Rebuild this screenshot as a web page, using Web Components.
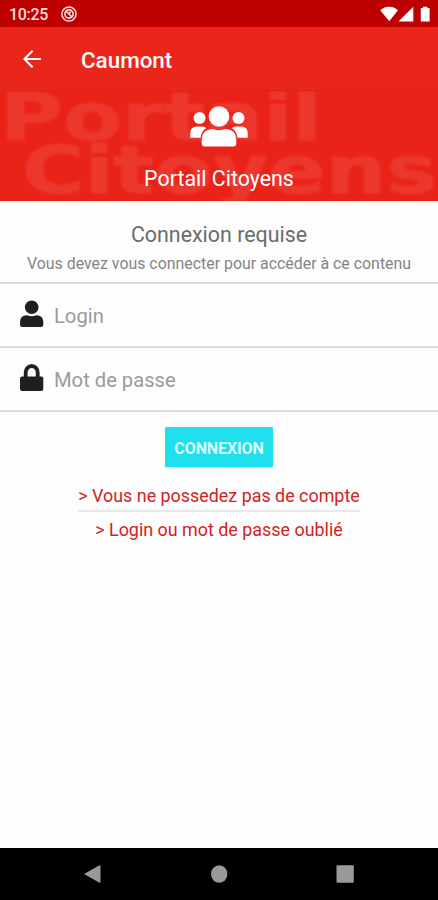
<!DOCTYPE html>
<html lang="fr">
<head>
<meta charset="UTF-8">
<meta name="viewport" content="width=device-width, initial-scale=1.0">
<title>Portail Citoyens</title>
<style>
  html, body {
    margin: 0;
    height: 100%;
    background-color: #fdfdfd;
    font-family: Roboto, "Liberation Sans", sans-serif;
  }
</style>
</head>
<body>
<login-page></login-page>

<script>
// Attach an open shadow root filled from a template
function render(host, html) {
  const template = document.createElement('template');
  template.innerHTML = html;
  host.attachShadow({ mode: 'open' }).appendChild(template.content.cloneNode(true));
}

// Android status bar
class StatusBar extends HTMLElement {
  constructor() {
    super();
    render(this, `
      <style>
      :host {
        display: flex;
        align-items: center;
        height: 27px;
        padding: 0 8px 0 9px;
        box-sizing: border-box;
        background-color: #be0000;
        color: #fbdcdc;
      }
      .time {
        font-size: 16px;
        font-weight: 500;
        letter-spacing: -0.3px;
        line-height: 20px;
        margin-top: 2px;
      }
      .app { width: 16px; height: 16px; margin-left: 13px; }
      .right { display: block; width: 50px; height: 16px; margin-left: auto; }
      </style>
      <span class="time">10:25</span>
      <svg class="app" viewBox="0 0 16 16" fill="none" stroke="#fbdcdc">
        <circle cx="8" cy="8" r="7.1" stroke-width="1.5"/>
        <circle cx="8" cy="8" r="4.1" stroke-width="1.6"/>
        <path d="M4.5 4.5L11.5 11.5M7 7.5L10 6" stroke-width="1.6"/>
      </svg>
      <svg class="right" viewBox="0 0 50 16" fill="#fff">
        <path d="M.3 4.2C5.5-.3 12.8-.3 18 4.2L9.2 15.3Z"/>
        <path d="M33.3.8V15.5H18.5Z"/>
        <path d="M43 .7h4.400v1.300h2.200v13.500h-8.800V2h2.200z"/>
      </svg>
    `);
  }
}

// Top bar: back arrow + page title
class AppBar extends HTMLElement {
  constructor() {
    super();
    render(this, `
      <style>
      :host {
        display: flex;
        align-items: center;
        height: 64px;
        padding-left: 22px;
        box-sizing: border-box;
        background-color: #ea261b;
        border-bottom: 1px solid #e12218;
        color: #fff;
      }
      svg { width: 20px; height: 20px; }
      h1 {
        margin: 2px 0 0 39px;
        font-size: 22.4px;
        font-weight: 500;
        line-height: 28px;
      }
      </style>
      <svg viewBox="0 0 20 20" fill="none" stroke="#fff" stroke-width="2">
        <path d="M18.8 10H3M10.6 1.8L2.4 10L10.6 18.2"/>
      </svg>
      <h1><slot></slot></h1>
    `);
  }
}

// Banner with the large faded lettering behind the icon
class PortalBanner extends HTMLElement {
  constructor() {
    super();
    render(this, `
      <style>
      :host {
        display: grid;
        height: 110px;
        overflow: hidden;
        background-color: #ea2319;
        color: #fff;
      }
      .back, .front { grid-area: 1 / 1; }
      .back {
        width: 438px;
        height: 110px;
        font-family: "DejaVu Sans", sans-serif;
        font-weight: bold;
        filter: blur(1.3px);
      }
      .front {
        z-index: 1;
        display: flex;
        flex-direction: column;
        align-items: center;
        padding-top: 15px;
      }
      .front svg { width: 58px; height: 41px; }
      .name {
        margin-top: 19px;
        font-size: 21.4px;
        line-height: 26px;
      }
      </style>
      <svg class="back" viewBox="0 0 438 110" fill="#ec372d" stroke="#ec372d" stroke-width="1" aria-hidden="true">
        <text x="0" y="49" font-size="65" textLength="322" lengthAdjust="spacingAndGlyphs">Portail</text>
        <text x="22" y="102" font-size="65" textLength="415" lengthAdjust="spacingAndGlyphs">Citoyens</text>
      </svg>
      <div class="front">
        <svg viewBox="0 0 58 41" fill="#fff">
          <circle cx="29" cy="10.5" r="10.3"/>
          <circle cx="9.5" cy="12" r="6"/>
          <circle cx="48.5" cy="12" r="6"/>
          <path d="M.3 31.7V27Q.3 20.5 7 20.5H12Q14.5 20.5 16.5 22Q11 25.3 10.6 31.7Z"/>
          <path d="M57.7 31.7V27Q57.7 20.5 51 20.5H46Q43.5 20.5 41.5 22Q47 25.3 47.4 31.7Z"/>
          <path d="M22 23H23Q29 25.5 35 23H36Q46.3 23.5 46.3 34V37.5Q46.3 40.5 43.3 40.5H14.7Q11.7 40.5 11.7 37.5V34Q11.7 23.5 22 23Z"/>
        </svg>
        <div class="name"><slot></slot></div>
      </div>
    `);
  }
}

// Input row, the icon goes in the "icon" slot
class FormField extends HTMLElement {
  constructor() {
    super();
    render(this, `
      <style>
      :host {
        display: flex;
        align-items: center;
        height: 64px;
        padding-left: 19px;
        box-sizing: border-box;
        border-bottom: 2px solid #dedede;
        color: #9b9b9b;
      }
      ::slotted(svg) { width: 25px; height: 28px; margin-bottom: 2px; }
      .label {
        margin: 1px 0 0 10px;
        font-size: 20.2px;
        line-height: 26px;
      }
      </style>
      <slot name="icon"></slot>
      <span class="label"><slot></slot></span>
    `);
  }
}

// Android navigation bar
class NavBar extends HTMLElement {
  constructor() {
    super();
    render(this, `
      <style>
      :host {
        display: flex;
        justify-content: space-between;
        align-items: center;
        height: 52px;
        padding: 0 84px;
        box-sizing: border-box;
        background-color: #000;
      }
      svg { width: 18px; height: 18px; fill: #999; }
      </style>
      <svg viewBox="0 0 18 18"><path d="M0 9L15.5.2Q16.5 0 16.5 1V17Q16.5 18 15.5 17.8Z"/></svg>
      <svg viewBox="0 0 18 18"><ellipse cx="9.2" cy="9" rx="8.2" ry="8.8"/></svg>
      <svg viewBox="0 0 18 18"><rect x=".5" y=".3" width="17.3" height="17.5" rx="1"/></svg>
    `);
  }
}

class LoginPage extends HTMLElement {
  constructor() {
    super();
    render(this, `
      <style>
      :host {
        display: flex;
        flex-direction: column;
        height: 900px;
        overflow: hidden;
      }
      main {
        flex: 1;
        display: flex;
        flex-direction: column;
        align-items: center;
      }
      form-field { align-self: stretch; }
      .intro {
        align-self: stretch;
        height: 83px;
        box-sizing: border-box;
        border-bottom: 2px solid #d8d8d8;
        text-align: center;
      }
      h2 {
        margin: 21px 0 0;
        font-size: 21.4px;
        font-weight: 400;
        line-height: 26px;
        color: #6c6c6c;
      }
      .intro p {
        margin: 6px 0 0;
        font-size: 15.9px;
        line-height: 20px;
        color: #858585;
      }
      button {
        width: 108px;
        height: 40px;
        margin: 15px 0 0;
        padding: 2px 0 0;
        border: 0;
        border-radius: 1px;
        background-color: #1fe0ec;
        color: #d8fcff;
        font-family: inherit;
        font-size: 16px;
        font-weight: 700;
        letter-spacing: -0.1px;
        box-shadow: 0 1px 1px #bfeef0;
      }
      .link {
        font-size: 17.9px;
        line-height: 24px;
        color: #d3221f;
      }
      .signup {
        margin-top: 17px;
        padding-bottom: 2px;
        border-bottom: 2px solid #e9e9e9;
      }
      .forgot { margin-top: 6px; }
      </style>
      <status-bar></status-bar>
      <app-bar>Caumont</app-bar>
      <portal-banner>Portail Citoyens</portal-banner>
      <main>
        <div class="intro">
          <h2>Connexion requise</h2>
          <p>Vous devez vous connecter pour accéder à ce contenu</p>
        </div>
        <form-field>
          <svg slot="icon" viewBox="0 0 25 28" fill="#1f1f1f">
            <circle cx="12.7" cy="7.2" r="6.8"/>
            <path d="M8 15.2Q12.7 17.5 17.4 15.2Q24.3 15.5 24.3 22V24.5Q24.3 27 21.8 27H3.5Q1 27 1 24.5V22Q1 15.5 8 15.2Z"/>
          </svg>
          Login
        </form-field>
        <form-field>
          <svg slot="icon" viewBox="0 0 25 28">
            <path d="M6.7 13V8.5a6 6.5 0 0 1 12 0V13" fill="none" stroke="#1f1f1f" stroke-width="3.8"/>
            <rect x="1" y="12.5" width="23.3" height="14.5" rx="2" fill="#1f1f1f"/>
          </svg>
          Mot de passe
        </form-field>
        <button type="button">CONNEXION</button>
        <div class="link signup">&gt; Vous ne possedez pas de compte</div>
        <div class="link forgot">&gt; Login ou mot de passe oublié</div>
      </main>
      <nav-bar></nav-bar>
    `);
  }
}

customElements.define('status-bar', StatusBar);
customElements.define('app-bar', AppBar);
customElements.define('portal-banner', PortalBanner);
customElements.define('form-field', FormField);
customElements.define('nav-bar', NavBar);
customElements.define('login-page', LoginPage);
</script>
</body>
</html>
